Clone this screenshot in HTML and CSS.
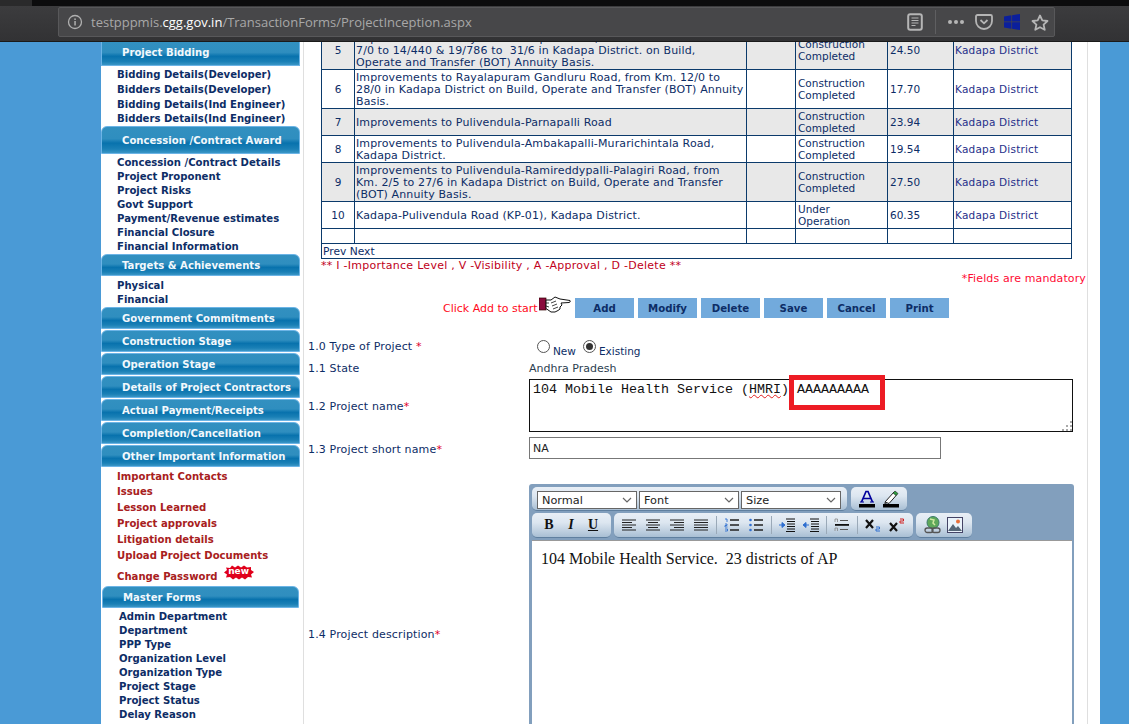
FILE: index.html
```html
<!DOCTYPE html>
<html lang="en">
<head>
<meta charset="utf-8">
<title>Project Inception</title>
<link rel="stylesheet" href="styles.css">
</head>
<body>
<header class="browser">
  <div class="strip"><span class="strip-a"></span><span class="strip-b"></span></div>
  <div class="bar">
    <div class="urlbar">
      <svg class="info" width="16" height="16" viewBox="0 0 16 16"><circle cx="8" cy="8" r="6.500" fill="none" stroke="#b0b0b0" stroke-width="1.300"/><rect x="7.300" y="7" width="1.500" height="4.500" fill="#b0b0b0"/><rect x="7.300" y="4.400" width="1.500" height="1.600" fill="#b0b0b0"/></svg>
      <span class="url">testpppmis.<b>cgg.gov.in</b>/TransactionForms/ProjectInception.aspx</span>
      <div class="actions">
        <span class="slot"><svg width="16" height="18" viewBox="0 0 16 18"><rect x="1.200" y="1.200" width="13.600" height="15.600" rx="2" fill="none" stroke="#b5b5b5" stroke-width="2"/><path d="M4.500 5h7M4.500 7.500h7M4.500 10h7M4.500 12.500h4" stroke="#b5b5b5" stroke-width="1.100"/></svg></span>
        <span class="divider"></span>
        <span class="slot"><svg width="18" height="6" viewBox="0 0 18 6"><circle cx="3" cy="3" r="2" fill="#b5b5b5"/><circle cx="9" cy="3" r="2" fill="#b5b5b5"/><circle cx="15" cy="3" r="2" fill="#b5b5b5"/></svg></span>
        <span class="slot"><svg width="18" height="16" viewBox="0 0 18 16"><path d="M2.500 1h13A1.500 1.500 0 0 1 17 2.500V7a8 8 0 0 1-16 0V2.500A1.500 1.500 0 0 1 2.500 1z" fill="none" stroke="#b5b5b5" stroke-width="1.800"/><path d="M5.500 6l3.500 3.300L12.500 6" fill="none" stroke="#b5b5b5" stroke-width="1.800"/></svg></span>
        <span class="slot"><svg width="16" height="16" viewBox="0 0 16 16"><path d="M0 2.400l7.400-1.100v6.300H0zM8.100 1.200L16 0v7.600H8.100zM0 8.300h7.400v6.400L0 13.600zM8.100 8.300H16V16l-7.900-1.200z" fill="#0b1f9c"/></svg></span>
        <span class="slot"><svg width="18" height="17" viewBox="0 0 18 17"><path d="M9 1.500l2.300 4.900 5.200.6-3.900 3.600 1.100 5.200L9 13.200l-4.700 2.600 1.100-5.200L1.500 7l5.200-.6z" fill="none" stroke="#b5b5b5" stroke-width="1.800" stroke-linejoin="round"/></svg></span>
      </div>
    </div>
  </div>
</header>

<div class="sheet">
  <nav class="side">
    <h3 class="head head-first">Project Bidding</h3>
    <ul class="links links-bid">
      <li>Bidding Details(Developer)</li>
      <li>Bidders Details(Developer)</li>
      <li>Bidding Details(Ind Engineer)</li>
      <li>Bidders Details(Ind Engineer)</li>
    </ul>
    <h3 class="head head-tall">Concession /Contract Award</h3>
    <ul class="links">
      <li>Concession /Contract Details</li>
      <li>Project Proponent</li>
      <li>Project Risks</li>
      <li>Govt Support</li>
      <li>Payment/Revenue estimates</li>
      <li>Financial Closure</li>
      <li>Financial Information</li>
    </ul>
    <h3 class="head head-targets">Targets &amp; Achievements</h3>
    <ul class="links">
      <li>Physical</li>
      <li>Financial</li>
    </ul>
    <h3 class="head">Government Commitments</h3>
    <h3 class="head">Construction Stage</h3>
    <h3 class="head">Operation Stage</h3>
    <h3 class="head">Details of Project Contractors</h3>
    <h3 class="head">Actual Payment/Receipts</h3>
    <h3 class="head">Completion/Cancellation</h3>
    <h3 class="head">Other Important Information</h3>
    <ul class="links links-red">
      <li>Important Contacts</li>
      <li>Issues</li>
      <li>Lesson Learned</li>
      <li>Project approvals</li>
      <li>Litigation details</li>
      <li>Upload Project Documents</li>
      <li class="change">Change Password
        <span class="newbadge"><svg width="32" height="15" viewBox="0 0 32 15"><path d="M1 7.500L4 5 3 2.500 7 3 9 .5 12 2.500 15 .5 18 2.500 21 .5 24 2.500 28 2 28 5 31 7 28 9.500 29 12.500 25 12 22 14.500 19 12.500 16 14.500 13 12.500 10 14.500 7 12 3 12.500 4 9.500z" fill="#e0001b"/></svg><em>new</em></span>
      </li>
    </ul>
    <h3 class="head head-master">Master Forms</h3>
    <ul class="links links-master">
      <li>Admin Department</li>
      <li>Department</li>
      <li>PPP Type</li>
      <li>Organization Level</li>
      <li>Organization Type</li>
      <li>Project Stage</li>
      <li>Project Status</li>
      <li>Delay Reason</li>
    </ul>
  </nav>

  <main class="main">
    <table class="grid">
      <colgroup><col class="c1"><col class="c2"><col class="c3"><col class="c4"><col class="c5"><col class="c6"></colgroup>
      <tr class="alt"><td class="num">5</td><td class="desc">Improvements to Rayachoti-Vempalli Road, from Km.<br>7/0 to 14/440 &amp; 19/786 to&nbsp; 31/6 in Kadapa District. on Build,<br>Operate and Transfer (BOT) Annuity Basis.</td><td></td><td>Construction<br>Completed</td><td>24.50</td><td class="dist">Kadapa District</td></tr>
      <tr><td class="num">6</td><td class="desc">Improvements to Rayalapuram Gandluru Road, from Km. 12/0 to<br>28/0 in Kadapa District on Build, Operate and Transfer (BOT) Annuity<br>Basis.</td><td></td><td>Construction<br>Completed</td><td>17.70</td><td class="dist">Kadapa District</td></tr>
      <tr class="alt"><td class="num">7</td><td class="desc">Improvements to Pulivendula-Parnapalli Road</td><td></td><td>Construction<br>Completed</td><td>23.94</td><td class="dist">Kadapa District</td></tr>
      <tr><td class="num">8</td><td class="desc">Improvements to Pulivendula-Ambakapalli-Murarichintala Road,<br>Kadapa District.</td><td></td><td>Construction<br>Completed</td><td>19.54</td><td class="dist">Kadapa District</td></tr>
      <tr class="alt"><td class="num">9</td><td class="desc">Improvements to Pulivendula-Ramireddypalli-Palagiri Road, from<br>Km. 2/5 to 27/6 in Kadapa District on Build, Operate and Transfer<br>(BOT) Annuity Basis.</td><td></td><td>Construction<br>Completed</td><td>27.50</td><td class="dist">Kadapa District</td></tr>
      <tr><td class="num">10</td><td class="desc">Kadapa-Pulivendula Road (KP-01), Kadapa District.</td><td></td><td>Under<br>Operation</td><td>60.35</td><td class="dist">Kadapa District</td></tr>
      <tr><td>&nbsp;</td><td></td><td></td><td></td><td></td><td></td></tr>
      <tr><td colspan="6" class="pager">Prev Next</td></tr>
    </table>
    <p class="legend">** I -Importance Level , V -Visibility , A -Approval , D -Delete **</p>
    <p class="mandatory">*Fields are mandatory</p>

    <div class="actionsrow">
      <span class="hint">Click Add to start</span>
      <svg class="hand" width="32" height="18" viewBox="0 0 32 18">
        <rect x="0" y="2" width="7" height="12" fill="#8a0a3c" stroke="#300" stroke-width=".7"/>
        <path d="M7 4l5 0 4-3 5 2 10 1.500q1 1.500-1 2l-8 .5 1 2-2 2 0 2-2 1.500-3 1.500-4 0-5-3.500z" fill="#fff" stroke="#111" stroke-width="1"/>
        <path d="M12 7l5-2M13 10l5-2M14 13l5-2M7 7l3 0M7 10l3 1" stroke="#111" stroke-width=".8" fill="none"/>
      </svg>
      <button class="btn">Add</button>
      <button class="btn">Modify</button>
      <button class="btn">Delete</button>
      <button class="btn">Save</button>
      <button class="btn">Cancel</button>
      <button class="btn">Print</button>
    </div>

    <div class="row row-type">
      <label class="lab">1.0 Type of Project <i>*</i></label>
      <div class="radios">
        <span class="radio"></span><span class="rtext">New</span>
        <span class="radio on"></span><span class="rtext">Existing</span>
      </div>
    </div>
    <div class="row row-state">
      <label class="lab">1.1 State</label>
      <span class="val">Andhra Pradesh</span>
    </div>
    <div class="row row-name">
      <label class="lab">1.2 Project name<i>*</i></label>
      <div class="area">
        104 Mobile Health Service (<span class="spell">HMRI</span>) AAAAAAAAA
        <span class="redbox"></span>
        <svg class="grip" width="10" height="10" viewBox="0 0 10 10"><path d="M8 0h2v2H8zM4 4h2v2H4zM8 4h2v2H8zM0 8h2v2H0zM4 8h2v2H4zM8 8h2v2H8z" fill="#aaa"/></svg>
      </div>
    </div>
    <div class="row row-short">
      <label class="lab">1.3 Project short name<i>*</i></label>
      <div class="short">NA</div>
    </div>
    <div class="row row-desc">
      <label class="lab">1.4 Project description<i>*</i></label>
      <div class="editor">
        <div class="tbrow">
          <div class="tbgroup group-sel">
            <span class="sel sel-a">Normal<svg width="10" height="6" viewBox="0 0 10 6"><path d="M1 1l4 4 4-4" fill="none" stroke="#666" stroke-width="1.200"/></svg></span>
            <span class="sel sel-b">Font<svg width="10" height="6" viewBox="0 0 10 6"><path d="M1 1l4 4 4-4" fill="none" stroke="#666" stroke-width="1.200"/></svg></span>
            <span class="sel sel-c">Size<svg width="10" height="6" viewBox="0 0 10 6"><path d="M1 1l4 4 4-4" fill="none" stroke="#666" stroke-width="1.200"/></svg></span>
          </div>
          <div class="tbgroup group-color">
            <span class="tool tool-w"><svg width="18" height="18" viewBox="0 0 18 18"><path d="M3.500 12L8 1.500h2L14.500 12M5.500 8.500h7" fill="none" stroke="#00009c" stroke-width="1.700"/><path d="M2 12h4M12 12h4" stroke="#00009c" stroke-width="1.200"/><rect x="1" y="14" width="16" height="3.500" fill="#000"/></svg></span>
            <span class="tool tool-w"><svg width="18" height="18" viewBox="0 0 18 18"><path d="M3 12L12 2l3 2.500L7 13.500z" fill="#fff" stroke="#222" stroke-width="1"/><path d="M11 3l2-2 3 2.500-2 2z" fill="#2f9d3f" stroke="#222" stroke-width=".6"/><path d="M3 12l-1 1.500 3 .5z" fill="#222"/><rect x="1" y="14" width="16" height="3.500" fill="#000"/></svg></span>
          </div>
        </div>
        <div class="tbrow tbrow-2">
          <div class="tbgroup group-fmt">
            <span class="tool txt bold">B</span>
            <span class="tool txt ital">I</span>
            <span class="tool txt under">U</span>
          </div>
          <div class="tbgroup group-par">
            <span class="tool tool-w"><svg width="16" height="12" viewBox="0 0 16 12"><path d="M1 1h14M1 3.500h10M1 6h14M1 8.500h10M1 11h14" stroke="#222"/></svg></span>
            <span class="tool tool-w"><svg width="16" height="12" viewBox="0 0 16 12"><path d="M1 1h14M3 3.500h10M1 6h14M3 8.500h10M1 11h14" stroke="#222"/></svg></span>
            <span class="tool tool-w"><svg width="16" height="12" viewBox="0 0 16 12"><path d="M1 1h14M5 3.500h10M1 6h14M5 8.500h10M1 11h14" stroke="#222"/></svg></span>
            <span class="tool tool-w"><svg width="16" height="12" viewBox="0 0 16 12"><path d="M1 1h14M1 3.500h14M1 6h14M1 8.500h14M1 11h14" stroke="#222"/></svg></span>
            <span class="sep"></span>
            <span class="tool tool-w"><svg width="16" height="14" viewBox="0 0 16 14"><path d="M6 2h9M6 7h9M6 12h9" stroke="#222" stroke-width="1.300"/><path d="M1 1h2v3M1 6h2v1.500H1V9h2.500M1 11h2.500v2H1" fill="none" stroke="#2f6fd0" stroke-width=".9"/></svg></span>
            <span class="tool tool-w"><svg width="16" height="14" viewBox="0 0 16 14"><path d="M6 2h9M6 7h9M6 12h9" stroke="#222" stroke-width="1.300"/><circle cx="2.500" cy="2" r="1.300" fill="#2f6fd0"/><circle cx="2.500" cy="7" r="1.300" fill="#2f6fd0"/><circle cx="2.500" cy="12" r="1.300" fill="#2f6fd0"/></svg></span>
            <span class="sep"></span>
            <span class="tool tool-w"><svg width="16" height="14" viewBox="0 0 16 14"><path d="M7 1h9M8 3.500h8M8 6h8M8 8.500h8M8 11h8M7 13.500h9" stroke="#111"/><path d="M0 7h5M3 4.500L6 7l-3 2.500z" fill="#2f6fd0" stroke="#2f6fd0"/></svg></span>
            <span class="tool tool-w"><svg width="16" height="14" viewBox="0 0 16 14"><path d="M7 1h9M8 3.500h8M8 6h8M8 8.500h8M8 11h8M7 13.500h9" stroke="#111"/><path d="M6 7H1M3 4.500L0 7l3 2.500z" fill="#2f6fd0" stroke="#2f6fd0"/></svg></span>
            <span class="sep"></span>
            <span class="tool tool-w"><svg width="16" height="14" viewBox="0 0 16 14"><path d="M6 2.500h8M6 11.500h8" stroke="#555" stroke-width="1.200"/><rect x="1" y="6" width="14" height="1.800" fill="#111"/><path d="M1 4V1h2.500v3M1 13v-3h2.500v3" fill="none" stroke="#888" stroke-width=".8"/></svg></span>
            <span class="sep"></span>
            <span class="tool tool-w"><svg width="18" height="14" viewBox="0 0 18 14"><path d="M2 2l7 8M9 2l-7 8" stroke="#111" stroke-width="2.200"/><path d="M12 9h3.500v2H12v2h4" fill="none" stroke="#2f6fd0" stroke-width="1"/></svg></span>
            <span class="tool tool-w"><svg width="18" height="14" viewBox="0 0 18 14"><path d="M2 5l7 8M9 5l-7 8" stroke="#111" stroke-width="2.200"/><path d="M12 1h3.500v2H12v2h4" fill="none" stroke="#d02020" stroke-width="1"/></svg></span>
          </div>
          <div class="tbgroup group-ins">
            <span class="tool"><svg width="18" height="18" viewBox="0 0 18 18"><circle cx="9" cy="6.500" r="6" fill="#5fa85a" stroke="#3b7a6a"/><path d="M6 3l4 1-1 3 2 2" fill="none" stroke="#d0e8a0" stroke-width="1.500"/><rect x="1" y="12" width="8" height="4.500" rx="2.200" fill="none" stroke="#555" stroke-width="1.300"/><rect x="8" y="12" width="8" height="4.500" rx="2.200" fill="none" stroke="#555" stroke-width="1.300"/></svg></span>
            <span class="tool"><svg width="16" height="16" viewBox="0 0 16 16"><rect x=".5" y=".5" width="15" height="15" fill="#eaf3fb" stroke="#446"/><path d="M1 14l5-7 3 4 2-2 4 5z" fill="#567"/><circle cx="11" cy="4.500" r="2" fill="#e8703a"/></svg></span>
          </div>
        </div>
        <div class="content">104 Mobile Health Service.&nbsp; 23 districts of AP</div>
      </div>
    </div>
  </main>
</div>
</body>
</html>
```
FILE: styles.css
```css
* { box-sizing: border-box; }
html, body { margin: 0; padding: 0; height: 724px; overflow: hidden; }
body { background: #4a9ad6; font-family: "DejaVu Sans", Verdana, sans-serif; font-size: 10px; }
ul { list-style: none; margin: 0; padding: 0; }
p, h3 { margin: 0; }

/* browser chrome */
.browser { height: 42px; background: #38383a; border-bottom: 1px solid #1a1a1a; }
.strip { height: 6px; display: flex; }
.strip-a { width: 32px; background: #2a2a2b; }
.strip-b { flex: 1; background: #0c0c0d; }
.bar { height: 35px; padding: 1px 0 0 58px; background: linear-gradient(#3c3c3e, #323234); }
.urlbar { width: 997px; height: 30px; display: flex; align-items: center; background: #474749; border: 1px solid #58585a; border-radius: 2px; padding-left: 8px; }
.info { flex: none; }
.url { margin-left: 8px; font: 13px "Open Sans", sans-serif; color: #a8a8a8; white-space: nowrap; }
.url b { font-weight: 400; color: #fff; }
.actions { margin-left: auto; display: flex; align-items: center; }
.slot { width: 28px; height: 24px; display: flex; align-items: center; justify-content: center; }
.divider { width: 1px; height: 24px; background: #5f5f61; margin: 0 6px; }

/* page */
.sheet { width: 999px; height: 682px; margin-left: 101px; background: #fff; display: flex; overflow: hidden; }
.side { width: 199px; flex: none; }
.head { height: 22px; margin-bottom: 1px; padding-left: 20px; font-size: 10.100px; line-height: 21px; font-weight: 700; color: #f2f8fc; white-space: nowrap;
  border: 1px solid #6cb4e6; border-radius: 6px 6px 0 0;
  background: linear-gradient(#3290c0 0, #2f8ebf 45%, #0872ad 62%, #1a80b6 85%, #3a96c6 100%); }
.head-first { height: 24px; line-height: 22px; margin-bottom: 0; border-radius: 0; border-top: 0; }
.head-tall { height: 28px; line-height: 27px; margin-bottom: 1px; }
.head-targets { margin-bottom: 2px; }
.head-master { margin: 0 1px 1px; padding-left: 20px; }
.links { background: #fff; padding-left: 16px; margin-bottom: 1px; font-weight: 700; font-size: 10.100px; color: #0d2d66; }
.links li { height: 14px; line-height: 16px; white-space: nowrap; }
.links-bid { padding-top: 1px; margin-bottom: 0; }
.links-bid li { height: 14.750px; }
.links-red { color: #a82020; margin-bottom: 0; }
.links-red li { height: 16px; line-height: 18px; }
.links-red li:first-child { height: 15px; }
.links-red .change { height: 23px; line-height: 27px; display: flex; align-items: flex-start; }
.newbadge { position: relative; width: 32px; height: 15px; margin: 2px 0 0 5px; }
.newbadge svg { display: block; }
.newbadge em { position: absolute; inset: 0; text-align: center; font: 700 9px/13px "DejaVu Sans", sans-serif; color: #fff; }
.links-master { padding-left: 18px; margin-bottom: 0; }

/* main column */
.main { width: 785px; margin-left: 3px; padding-left: 4px; border-left: 1px solid #dfdfdf; border-right: 1px solid #dfdfdf; overflow: hidden; flex: none; color: #0d2d66; }
.grid { width: 750px; margin: -12px 0 0 13px; border-collapse: collapse; table-layout: fixed; font-size: 10.500px; line-height: 12px; color: #0d2d66; background: #fff; }
.grid td { border: 1px solid #0b3a6b; padding: 1px 2px; white-space: nowrap; overflow: hidden; vertical-align: middle; }
.alt td { background: #e8e8e8; }
.c1 { width: 33px; } .c2 { width: 392px; } .c3 { width: 49px; } .c4 { width: 92px; } .c5 { width: 66px; } .c6 { width: 118px; }
.grid .num { text-align: center; }
.grid .desc { padding: 2px 1px 0; font-size: 11px; letter-spacing: .13px; }
.grid .dist { padding-left: 1px; color: #1f2f8a; letter-spacing: .2px; }
.grid .pager { padding: 2px 1px 0; font-size: 10.700px; }
.legend { margin-left: 13px; height: 12px; padding-top: 1px; line-height: 12px; color: #c00020; font-size: 11px; letter-spacing: .26px; white-space: nowrap; }
.mandatory { height: 12px; margin-top: 1px; padding: 1px 1px 0 0; line-height: 12px; text-align: right; color: #ff0a33; font-size: 11px; letter-spacing: .12px; }

.actionsrow { display: flex; align-items: center; height: 20px; margin-top: 14px; padding-left: 135px; }
.hint { color: #ff0a20; font-size: 11px; width: 96px; white-space: nowrap; }
.hand { width: 32px; margin-right: 4px; margin-top: -6px; flex: none; }
.btn { width: 59px; height: 20px; margin-right: 4px; padding: 0; border: 0; background: #72aadc; color: #0d2d66; font: 700 10.200px "DejaVu Sans", sans-serif; }

.row { display: flex; align-items: center; }
.lab { width: 221px; flex: none; font-size: 11px; letter-spacing: .15px; color: #0d2d66; white-space: nowrap; }
.lab i { font-style: normal; color: #e0002a; }
.row-name .lab, .row-short .lab { padding-top: 2px; }
.row-type { height: 20px; margin-top: 18px; }
.radios { display: flex; align-items: center; margin: 2px 0 0 8px; }
.radio { width: 13px; height: 13px; margin-top: -2px; border-radius: 50%; border: 1px solid #555; background: #fff; position: relative; }
.radio.on::after { content: ""; position: absolute; inset: 2px; border-radius: 50%; background: #333; }
.rtext { margin: 7px 7px 0 3px; font-size: 10.500px; color: #0d2d66; }
.row-state { height: 20px; margin-top: 2px; }
.val { font-size: 11px; color: #2c3e50; }
.row-name { height: 53px; margin-top: 1px; }
.area { position: relative; width: 544px; height: 53px; padding: 2px 3px; border: 1px solid #111; font: 13.330px/15px "Liberation Mono", monospace; color: #111; background: #fff; white-space: nowrap; }
.spell { text-decoration: underline wavy #e02020 1px; }
.redbox { position: absolute; left: 259px; top: -5px; width: 96px; height: 35px; border: 5px solid #ed1c24; }
.grip { position: absolute; right: 0; bottom: 0; }
.row-short { height: 22px; margin-top: 5px; }
.short { width: 412px; height: 22px; padding-left: 3px; border: 1px solid #777; font: 11px/22px "DejaVu Sans", sans-serif; color: #222; }
.row-desc { height: 300px; margin-top: 25px; }

/* rich editor */
.editor { width: 545px; height: 300px; padding: 3px 2px 0 3px; background: #829fbd; border-radius: 3px 3px 0 0; display: flex; flex-direction: column; }
.tbrow { display: flex; height: 24px; gap: 4px; }
.tbrow-2 { margin-top: 2px; height: 25px; gap: 3px; }
.tbgroup { display: flex; align-items: center; border-radius: 5px; border-bottom: 1px solid #5f7f9f; background: linear-gradient(#e9eff6, #dce6f0 40%, #a9bfd4); }
.group-sel { width: 315px; padding-left: 5px; gap: 2px; }
.group-color { width: 56px; padding-left: 4px; }
.group-fmt { width: 79px; padding-left: 6px; }
.group-par { width: 299px; padding-left: 3px; }
.group-ins { width: 56px; padding-left: 6px; }
.sel { height: 18px; margin-top: 3px; display: flex; align-items: center; justify-content: space-between; padding: 0 4px; background: #fff; border: 1px solid #666; font: 11.300px "DejaVu Sans", sans-serif; color: #222; }
.sel-a, .sel-b, .sel-c { width: 100px; }
.tool { width: 22px; height: 20px; display: flex; align-items: center; justify-content: center; flex: none; }
.tool-w { width: 24px; }
.sep { width: 1px; height: 18px; margin: 0 3px; background: #9aa9b8; flex: none; }
.txt { font: 700 14px "Liberation Serif", serif; color: #111; }
.ital { font-style: italic; }
.under { text-decoration: underline; }
.content { flex: 1; margin-top: 2px; padding: 8px 9px; background: #fff; border-top: 1px solid #999; font: 16px/19px "Liberation Serif", serif; color: #111; white-space: nowrap; }
```
